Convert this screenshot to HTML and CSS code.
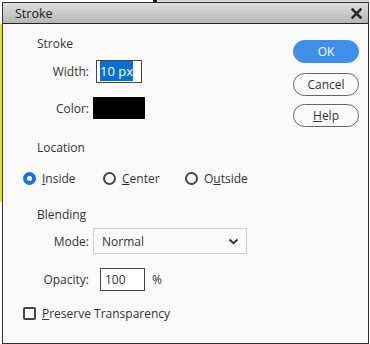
FILE: index.html
```html
<!DOCTYPE html>
<html>
<head>
    <meta charset="UTF-8">
    <title>Stroke</title>
    <link rel="stylesheet" href="styles.css">
</head>
<body>
<div class="dialog">
    <div class="titlebar">
        <span class="title">Stroke</span>
        <svg class="close" width="11" height="11" viewBox="0 0 11 11">
            <path d="M1.5 1.5 L9.5 9.5 M9.5 1.5 L1.5 9.5" stroke="#2b2b2b" stroke-width="2.6" stroke-linecap="square"/>
        </svg>
    </div>

    <div class="content">
        <div class="main">
            <div class="heading">Stroke</div>

            <div class="row row_width">
                <label class="label" for="width">Width:</label>
                <div class="text_field field_width" id="width"><span class="selected">10 px</span></div>
            </div>

            <div class="row row_color">
                <span class="label">Color:</span>
                <div class="swatch"></div>
            </div>

            <div class="heading heading_gap">Location</div>

            <div class="row radios">
                <div class="option option_inside"><span class="radio checked"></span><span><u>I</u>nside</span></div>
                <div class="option option_center"><span class="radio"></span><span><u>C</u>enter</span></div>
                <div class="option"><span class="radio"></span><span>O<u>u</u>tside</span></div>
            </div>

            <div class="heading heading_gap">Blending</div>

            <div class="row row_mode">
                <span class="label">Mode:</span>
                <div class="select">
                    <span>Normal</span>
                    <svg width="11" height="7" viewBox="0 0 11 7">
                        <path d="M1.5 1.5 L5.5 5.2 L9.5 1.5" fill="none" stroke="#333" stroke-width="2"/>
                    </svg>
                </div>
            </div>

            <div class="row row_opacity">
                <span class="label">Opacity:</span>
                <div class="text_field field_opacity">100</div>
                <span class="unit">%</span>
            </div>

            <div class="row row_check">
                <span class="checkbox"></span>
                <span><u>P</u>reserve Transparency</span>
            </div>
        </div>

        <div class="buttons">
            <button class="btn btn_primary" type="button">OK</button>
            <button class="btn" type="button">Cancel</button>
            <button class="btn" type="button"><u>H</u>elp</button>
        </div>
    </div>
</div>
</body>
</html>
```

FILE: styles.css
```css
html, body {
    margin: 0;
    height: 344px;
    overflow: hidden;
}

body {
    padding: 2px 1px 0 2px;
    box-sizing: border-box;
    font-family: "Open Sans", Arial, sans-serif;
    font-size: 12px;
    color: #333;
    background:
        linear-gradient(#1a1a1a, #1a1a1a) 153px 0 / 4px 2px no-repeat,
        linear-gradient(#dcdcdc, #dcdcdc) 157px 0 / 213px 2px no-repeat,
        linear-gradient(#e8df3a, #e8df3a) 0 24px / 2px 178px no-repeat,
        #fff;
}

.dialog {
    display: flex;
    flex-direction: column;
    height: 342px;
    box-sizing: border-box;
    border: 1px solid #333;
    background: #fafafa;
}

.titlebar {
    display: flex;
    align-items: center;
    justify-content: space-between;
    height: 20px;
    padding: 0 6px 0 12px;
    border-bottom: 1px solid #222;
    background: linear-gradient(#dedede, #b6b6b6);
}

.title {
    font-size: 12.5px;
    color: #1e1e1e;
}

.close {
    display: block;
}

.content {
    display: flex;
    flex: 1;
}

.main {
    flex: 1;
    padding: 12px 0 0 20px;
}

.heading {
    height: 16px;
    line-height: 16px;
    padding-left: 14px;
    color: #333;
}

.heading_gap {
    margin-top: 21px;
}

.row {
    display: flex;
    align-items: center;
}

.label {
    width: 66px;
    text-align: right;
    margin-right: 4px;
}

.row_width {
    margin-top: 8px;
    height: 23px;
}

.row_color {
    margin-top: 14px;
    height: 22px;
}

.text_field {
    box-sizing: border-box;
    height: 23px;
    border: 1px solid #444;
    background: #fff;
    font-size: 13px;
    line-height: 21px;
    padding-left: 4px;
}

.field_width {
    width: 46px;
    margin-left: 3px;
    padding-left: 3px;
}

.selected {
    background: #0a70d0;
    color: #fff;
    padding: 1px 0;
}

.swatch {
    width: 52px;
    height: 22px;
    background: #000;
}

.radios {
    margin-top: 14px;
    height: 16px;
}

.option {
    display: flex;
    align-items: center;
    gap: 6px;
}

.option_inside {
    width: 80px;
}

.option_center {
    width: 82px;
}

.radio {
    box-sizing: border-box;
    width: 13px;
    height: 13px;
    border: 2px solid #444;
    border-radius: 50%;
    background: #fff;
}

.radio.checked {
    border: 4px solid #1473e6;
}

.row_mode {
    margin-top: 5px;
    height: 26px;
}

.select {
    display: flex;
    align-items: center;
    justify-content: space-between;
    box-sizing: border-box;
    width: 154px;
    height: 26px;
    padding: 0 7px 0 8px;
    border: 1px solid #cfcfcf;
    background: #fafafa;
}

.select svg {
    display: block;
}

.row_opacity {
    margin-top: 14px;
    height: 23px;
}

.field_opacity {
    width: 45px;
    margin-left: 7px;
    padding-left: 4px;
    font-size: 12px;
}

.unit {
    margin-left: 7px;
}

.row_check {
    margin-top: 14px;
    height: 16px;
    gap: 6px;
}

.checkbox {
    box-sizing: border-box;
    width: 13px;
    height: 13px;
    border: 2px solid #444;
    border-radius: 2px;
    background: #fff;
}

.buttons {
    display: flex;
    flex-direction: column;
    width: 66px;
    padding-top: 16px;
    margin-right: 9px;
}

.btn {
    box-sizing: border-box;
    height: 23px;
    margin: 0 0 8px 0;
    padding: 0;
    border: 1px solid #666;
    border-radius: 12px;
    background: #fafafa;
    font: 12px/20px "Open Sans", Arial, sans-serif;
    color: #333;
}

.btn_primary {
    margin-bottom: 10px;
    border-color: #3f8ee8;
    background: #3f8ee8;
    color: #fff;
}
```
